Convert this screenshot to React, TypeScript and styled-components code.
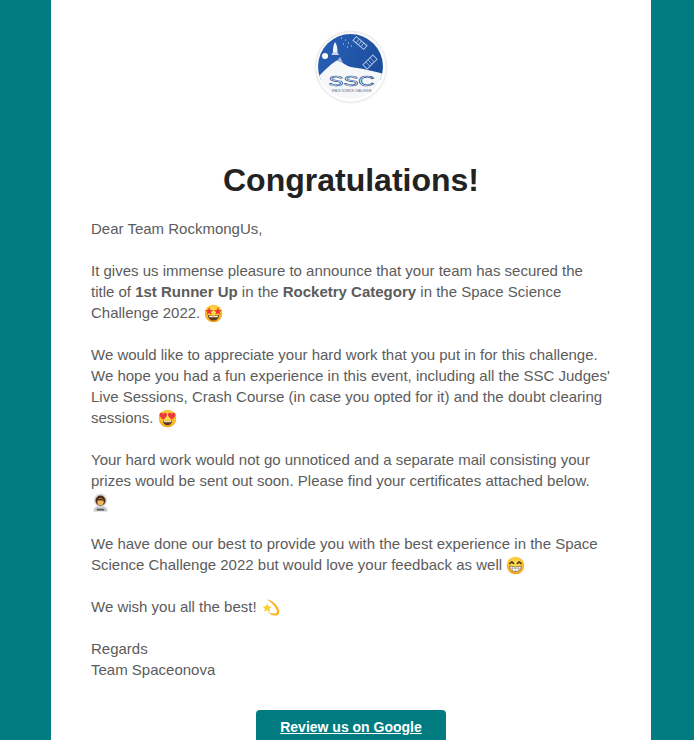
import styled, { createGlobalStyle } from "styled-components";

const GlobalStyle = createGlobalStyle`
  html, body {
    margin: 0;
    padding: 0;
    height: 740px;
    overflow: hidden;
    background: #007c80;
  }
`;

const Page = styled.div`
  display: flex;
  justify-content: center;
  height: 740px;
  padding-left: 8px;
  overflow: hidden;
  background: #007c80;
`;

const Card = styled.div`
  width: 600px;
  height: 800px;
  flex: none;
  box-sizing: border-box;
  padding: 30px 40px 0;
  background: #ffffff;
  font-family: "Liberation Sans", Arial, sans-serif;
`;

const LogoWrap = styled.div`
  display: flex;
  justify-content: center;
  height: 74px;
`;

const Title = styled.h1`
  margin: 49px 0 0;
  font-size: 32px;
  line-height: 54px;
  font-weight: 700;
  text-align: center;
  color: #222222;
`;

const Paragraph = styled.p`
  margin: 0 0 21px;
  font-size: 15px;
  line-height: 21px;
  color: #5c5c5c;
`;

const Body = styled.div`
  margin-top: 11px;
`;

const Strong = styled.strong`
  font-weight: 700;
`;

const ButtonRow = styled.div`
  display: flex;
  justify-content: center;
  margin-top: 30px;
`;

const Button = styled.a`
  display: block;
  width: 190px;
  height: 50px;
  box-sizing: border-box;
  padding-top: 8px;
  border-radius: 4px;
  background: #007c80;
  color: #ffffff;
  font-size: 14px;
  line-height: 19px;
  font-weight: 700;
  text-align: center;
  text-decoration: underline;
`;

const EmojiSvg = styled.svg`
  display: inline-block;
  width: 19px;
  height: 19px;
  vertical-align: -5px;
`;

const Face = () => (
  <>
    <defs>
      <radialGradient id="faceFill" cx="50%" cy="40%" r="60%">
        <stop offset="0%" stopColor="#fde25a" />
        <stop offset="70%" stopColor="#fbc02d" />
        <stop offset="100%" stopColor="#f29b12" />
      </radialGradient>
    </defs>
    <circle cx="10" cy="10" r="9.2" fill="url(#faceFill)" />
  </>
);

const Star = ({ x, y }: { x: number; y: number }) => (
  <path
    transform={`translate(${x} ${y})`}
    d="M0-4.2 1.2-1.4 4.3-1.2 1.9.8 2.7 3.8 0 2.2-2.7 3.8-1.9.8-4.3-1.2-1.2-1.4Z"
    fill="#f0392f"
  />
);

const Heart = ({ x, y }: { x: number; y: number }) => (
  <path
    transform={`translate(${x} ${y})`}
    d="M0 3.6C-2.6 1.6-4 .2-4-1.5-4-2.9-2.9-3.6-2-3.6-1.1-3.6-.4-3.1 0-2.2.4-3.1 1.1-3.6 2-3.6 2.9-3.6 4-2.9 4-1.5 4 .2 2.6 1.6 0 3.6Z"
    fill="#ee3b3b"
  />
);

const StarEyes = () => (
  <EmojiSvg viewBox="0 0 20 20">
    <Face />
    <Star x={5.4} y={7.6} />
    <Star x={14.6} y={7.6} />
    <path d="M4 11.6C6.5 12.6 13.5 12.6 16 11.6 15.8 15.2 13 17.4 10 17.4 7 17.4 4.2 15.2 4 11.6Z" fill="#5d3a1a" />
    <path d="M5.2 12.3C7.5 13 12.5 13 14.8 12.3L14.5 13.6C12.5 14.1 7.5 14.1 5.5 13.6Z" fill="#fff" />
  </EmojiSvg>
);

const HeartEyes = () => (
  <EmojiSvg viewBox="0 0 20 20">
    <Face />
    <Heart x={5.5} y={7.6} />
    <Heart x={14.5} y={7.6} />
    <path d="M5 12C7 12.9 13 12.9 15 12 14.8 15.2 12.6 17 10 17 7.4 17 5.2 15.2 5 12Z" fill="#5d3a1a" />
    <path d="M6 12.6C8 13.1 12 13.1 14 12.6L13.8 13.7C12 14.1 8 14.1 6.2 13.7Z" fill="#fff" />
  </EmojiSvg>
);

const Grin = () => (
  <EmojiSvg viewBox="0 0 20 20">
    <Face />
    <path d="M4 8 6.2 6.2 8.2 8M11.8 8 13.8 6.2 16 8" fill="none" stroke="#4a3418" strokeWidth="1.5" strokeLinecap="round" strokeLinejoin="round" />
    <path d="M3.8 10.6C6.5 11.6 13.5 11.6 16.2 10.6 16.2 14.4 13.4 16.4 10 16.4 6.6 16.4 3.8 14.4 3.8 10.6Z" fill="#fff" stroke="#6a5030" strokeWidth=".7" />
    <path d="M4.1 13H15.9M7 11.2V16M10 11.4V16.4M13 11.2V16" stroke="#9a9080" strokeWidth=".6" />
  </EmojiSvg>
);

const Astronaut = () => (
  <EmojiSvg viewBox="0 0 20 20">
    <path d="M2.6 19.4C2.6 15.4 5 13.6 10 13.6 15 13.6 17.4 15.4 17.4 19.4Z" fill="#c9c9cb" />
    <rect x="6" y="16.6" width="8" height="1.8" rx=".6" fill="#56565c" />
    <circle cx="10" cy="7.6" r="7" fill="#dcdcde" />
    <circle cx="10" cy="8" r="5.3" fill="#4a2c18" />
    <ellipse cx="10" cy="9.2" rx="3.4" ry="3.7" fill="#f5b75e" />
    <path d="M6.4 8.4C7 5.6 13 5.6 13.6 8.4 11.8 7.4 8.2 7.4 6.4 8.4Z" fill="#3a2010" />
  </EmojiSvg>
);

const Dizzy = () => (
  <EmojiSvg viewBox="0 0 20 20">
    <path d="M6 1.6C11 2 17 6.6 19 12.6 19.8 15.4 18.6 18 16 18.4 12.4 18.8 8.4 16.6 6.4 14 9 15.8 12.6 16.8 15.2 16.2 17 15.8 17.2 14.2 16.4 12.4 14.6 8 10.4 4.2 6 1.6Z" fill="#fbb117" />
    <path d="M6.4 5.8 7.9 8.7 11.2 9.1 8.9 11.3 9.5 14.6 6.5 13 3.5 14.6 4.1 11.3 1.6 9.1 5 8.7Z" fill="#fcd02f" />
  </EmojiSvg>
);

const Logo = () => (
  <svg width="74" height="74" viewBox="0 0 74 74">
    <defs>
      <clipPath id="dome">
        <circle cx="36.5" cy="36.5" r="32.5" />
      </clipPath>
      <linearGradient id="sky" x1="0" y1="0" x2="1" y2="0.3">
        <stop offset="0%" stopColor="#2a62b8" />
        <stop offset="100%" stopColor="#1c4e9e" />
      </linearGradient>
    </defs>
    <circle cx="37" cy="37" r="36.5" fill="#efeff0" />
    <circle cx="37" cy="37" r="34.5" fill="#ffffff" />
    <g clipPath="url(#dome)">
      <rect x="0" y="0" width="74" height="50" fill="url(#sky)" />
      <path d="M0 50 6 45C12 39 18 33 23 30.5 28 31.5 32 36 37 37 44 38 56 40 68 43.5L74 46V74H0Z" fill="#f6f7f9" />
    </g>
    <circle cx="11" cy="26" r="3" fill="#ffffff" />
    <path d="M21 12C23 15 23.6 18 23.4 22H19C18.8 18 19.4 15 21 12Z" fill="#f3f5fa" />
    <path d="M19 22 17.4 25H25L23.4 22Z" fill="#c9d6ea" />
    <path d="M23 31 26 27 29 33Z" fill="#a9bedd" />
    <g transform="rotate(40 46 13)" stroke="#b7cbe8" fill="none">
      <rect x="39" y="10.5" width="14" height="5" strokeWidth="1" />
      <path d="M43 10.5V15.5M46 10.5V15.5M49 10.5V15.5" strokeWidth="0.8" />
    </g>
    <g transform="rotate(-45 56 32)" stroke="#a9c0e2" fill="none">
      <rect x="49" y="29" width="14" height="6" strokeWidth="1" />
      <path d="M53 29V35M56 29V35M59 29V35" strokeWidth="0.8" />
    </g>
    <path d="M27 8H28M31 10H32M34 13H35M37 16H38M33 17H34M29 14H30" stroke="#dfe8f6" strokeWidth="1" />
    <text
      x="37.5"
      y="56"
      fontFamily="'Liberation Sans', sans-serif"
      fontSize="14"
      textAnchor="middle"
      textLength="46"
      lengthAdjust="spacingAndGlyphs"
      fill="none"
      stroke="#1f5296"
      strokeWidth="0.6"
    >
      SSC
    </text>
    <text
      x="37.5"
      y="61.5"
      fontFamily="'Liberation Sans', sans-serif"
      fontSize="3"
      textAnchor="middle"
      textLength="40"
      lengthAdjust="spacingAndGlyphs"
      fill="#5a6a86"
    >
      SPACE SCIENCE CHALLENGE
    </text>
  </svg>
);

export default function App() {
  return (
    <Page>
      <GlobalStyle />
      <Card>
        <LogoWrap>
          <Logo />
        </LogoWrap>
        <Title>Congratulations!</Title>
        <Body>
          <Paragraph>Dear Team RockmongUs,</Paragraph>
          <Paragraph>
            It gives us immense pleasure to announce that your team has secured the
            <br />
            title of <Strong>1st Runner Up</Strong> in the <Strong>Rocketry Category</Strong> in the
            Space Science Challenge 2022. <StarEyes />
          </Paragraph>
          <Paragraph>
            We would like to appreciate your hard work that you put in for this challenge. We hope
            you had a fun experience in this event, including all the SSC Judges' Live Sessions,
            Crash Course (in case you opted for it) and the doubt clearing sessions. <HeartEyes />
          </Paragraph>
          <Paragraph>
            Your hard work would not go unnoticed and a separate mail consisting your prizes would
            be sent out soon. Please find your certificates attached below. <Astronaut />
          </Paragraph>
          <Paragraph>
            We have done our best to provide you with the best experience in the Space Science
            Challenge 2022 but would love your feedback as well <Grin />
          </Paragraph>
          <Paragraph>
            We wish you all the best! <Dizzy />
          </Paragraph>
          <Paragraph>
            Regards
            <br />
            Team Spaceonova
          </Paragraph>
        </Body>
        <ButtonRow>
          <Button href="#">Review us on Google</Button>
        </ButtonRow>
      </Card>
    </Page>
  );
}
